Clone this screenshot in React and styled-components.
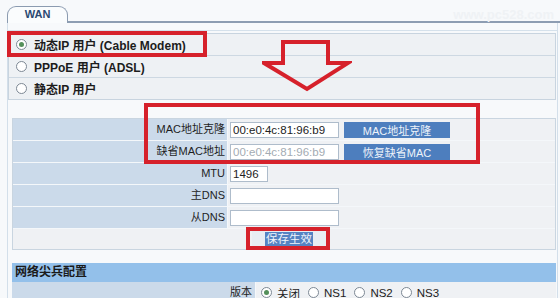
import styled, { createGlobalStyle } from "styled-components";

const FONT = `"Liberation Sans", "Noto Sans CJK SC", sans-serif`;
const RED = "#d6212b";

const GlobalStyle = createGlobalStyle`
  body {
    margin: 0;
    background: #f7f9fb;
    font-family: ${FONT};
  }
`;

const Page = styled.div`
  position: relative;
  width: 560px;
  height: 298px;
  overflow: hidden;
  box-sizing: border-box;
  padding-top: 6px;
  background: #f7f9fb;
`;

const TabBar = styled.div`
  display: flex;
  align-items: flex-end;
  height: 17px;
  padding-left: 7px;
`;

const Tab = styled.div`
  width: 61px;
  height: 17px;
  box-sizing: border-box;
  border: 1px solid #8b9bb0;
  border-bottom: none;
  border-radius: 9px 9px 0 0;
  background: #fafcfd;
  color: #2b4a72;
  font-size: 11px;
  font-weight: 700;
  line-height: 15px;
  text-align: center;
`;

const TabLine = styled.div`
  flex: 1;
  border-bottom: 2px solid #8d9db2;
`;

const Panel = styled.div`
  margin-left: 7px;
  width: 551px;
  box-sizing: border-box;
  padding-top: 7px;
  border-left: 1px solid #d3dfea;
  border-right: 1px solid #d3dfea;
`;

const Rule = styled.div`
  border-top: 1px solid #d5e1eb;
  margin-bottom: 2px;
`;

const RadioGroup = styled.div`
  display: flex;
  flex-direction: column;
  margin-right: 1px;
  border: 1px solid #c8d4df;
  background: #eef1f4;
`;

const RadioRow = styled.label`
  display: flex;
  align-items: center;
  gap: 7px;
  height: 21px;
  padding-left: 7px;
  color: #1c1c1c;
  font-size: 12px;
  font-weight: 700;

  &:not(:last-child) {
    border-bottom: 1px solid #cdd8e2;
  }
`;

const Radio = styled.span`
  position: relative;
  flex: none;
  width: 11px;
  height: 11px;
  box-sizing: border-box;
  border: 1px solid #7d8894;
  border-radius: 50%;
  background: #fff;

  &::after {
    content: "";
    display: ${(p) => (p.$checked ? "block" : "none")};
    position: absolute;
    inset: 2px;
    border-radius: 50%;
    background: #55905b;
  }
`;

const FormTable = styled.div`
  margin: 18px 1px 0 4px;
  border: 1px solid #c9d5e0;
`;

const Row = styled.div`
  display: grid;
  grid-template-columns: ${(p) => p.$label}px 1fr;
  height: 21px;
  border-bottom: 1px solid #f4f7fa;
`;

const Label = styled.div`
  background: #cbdaea;
  border-right: 1px solid #f5f8fb;
  padding-right: ${(p) => p.$pad || 2}px;
  color: #1e1e1e;
  font-size: 11px;
  line-height: 21px;
  text-align: right;
`;

const Value = styled.div`
  display: flex;
  align-items: center;
  gap: ${(p) => p.$gap || 5}px;
  padding-left: ${(p) => p.$pad || 2}px;
  background: #eff1f4;
  color: #222;
  font-size: 11.5px;
`;

const Input = styled.input`
  width: ${(p) => p.$w || 109}px;
  height: 16px;
  box-sizing: border-box;
  margin: 0;
  padding: 0 2px;
  border: 1px solid #aebccb;
  background: #fff;
  color: #222;
  font-family: ${FONT};
  font-size: 11.5px;

  &:disabled {
    color: #a3abb3;
  }
`;

const ActionButton = styled.button`
  width: 106px;
  height: 16px;
  margin: 0;
  padding: 0;
  border: none;
  background: #4d7ebe;
  color: #eef3fa;
  font-family: ${FONT};
  font-size: 11px;
`;

const SaveRow = styled.div`
  display: flex;
  align-items: center;
  justify-content: center;
  height: 20px;
  padding-left: 10px;
  background: #eff1f4;
`;

const SaveButton = styled.button`
  display: flex;
  align-items: center;
  justify-content: center;
  width: 74px;
  height: 17px;
  margin: 0;
  padding: 0;
  border: none;
  background: #e8edf3;
  font-family: ${FONT};
`;

const Highlight = styled.span`
  padding: 0 1px;
  background: #5583c2;
  color: #f0f4fa;
  font-size: 11.5px;
  line-height: 14px;
`;

const Section = styled.div`
  margin: 13px 1px 0 4px;
`;

const SectionHeader = styled.div`
  height: 19px;
  padding-left: 3px;
  background: #93c0ea;
  color: #1a1a1a;
  font-size: 12px;
  font-weight: 700;
  line-height: 19px;
`;

const Option = styled.label`
  display: flex;
  align-items: center;
  gap: 5px;
  margin-right: 3px;
  font-size: 11.5px;
`;

const RedBox = styled.div`
  position: absolute;
  left: ${(p) => p.$x}px;
  top: ${(p) => p.$y}px;
  width: ${(p) => p.$w}px;
  height: ${(p) => p.$h}px;
  box-sizing: border-box;
  border: 4px solid ${RED};
  pointer-events: none;
`;

const Arrow = styled.svg`
  position: absolute;
  left: 262px;
  top: 40px;
  pointer-events: none;
`;

const Watermark = styled.div`
  position: absolute;
  top: 7px;
  right: 6px;
  color: #eff2f5;
  font-size: 13px;
  font-weight: 700;
`;

const MAC = "00:e0:4c:81:96:b9";

export default function App() {
  return (
    <>
      <GlobalStyle />
      <Page>
        <TabBar>
          <Tab>WAN</Tab>
          <TabLine />
        </TabBar>
        <Panel>
          <Rule />
          <RadioGroup>
            <RadioRow>
              <Radio $checked />
              动态IP 用户 (Cable Modem)
            </RadioRow>
            <RadioRow>
              <Radio />
              PPPoE 用户 (ADSL)
            </RadioRow>
            <RadioRow>
              <Radio />
              静态IP 用户
            </RadioRow>
          </RadioGroup>

          <FormTable>
            <Row $label={215}>
              <Label>MAC地址克隆</Label>
              <Value>
                <Input defaultValue={MAC} />
                <ActionButton>MAC地址克隆</ActionButton>
              </Value>
            </Row>
            <Row $label={215}>
              <Label>缺省MAC地址</Label>
              <Value>
                <Input defaultValue={MAC} disabled />
                <ActionButton>恢复缺省MAC</ActionButton>
              </Value>
            </Row>
            <Row $label={215}>
              <Label>MTU</Label>
              <Value>
                <Input $w={38} defaultValue="1496" />
              </Value>
            </Row>
            <Row $label={215}>
              <Label>主DNS</Label>
              <Value>
                <Input />
              </Value>
            </Row>
            <Row $label={215}>
              <Label>从DNS</Label>
              <Value>
                <Input />
              </Value>
            </Row>
            <SaveRow>
              <SaveButton>
                <Highlight>保存生效</Highlight>
              </SaveButton>
            </SaveRow>
          </FormTable>

          <Section>
            <SectionHeader>网络尖兵配置</SectionHeader>
            <Row $label={244}>
              <Label $pad={3}>版本</Label>
              <Value $gap={0} $pad={5}>
                <Option>
                  <Radio $checked />
                  关闭
                </Option>
                <Option>
                  <Radio />
                  NS1
                </Option>
                <Option>
                  <Radio />
                  NS2
                </Option>
                <Option>
                  <Radio />
                  NS3
                </Option>
              </Value>
            </Row>
          </Section>
        </Panel>

        <Watermark>www.pc528.com</Watermark>
        <RedBox $x={7} $y={31} $w={200} $h={26} />
        <RedBox $x={144} $y={103} $w={336} $h={61} />
        <RedBox $x={246} $y={227} $w={84} $h={23} />
        <Arrow width="90" height="52" viewBox="0 0 90 52">
          <polygon
            points="21,2 66,2 66,23 86,23 45,49 2,23 21,23"
            fill="none"
            stroke={RED}
            strokeWidth="4"
            strokeLinejoin="miter"
          />
        </Arrow>
      </Page>
    </>
  );
}
